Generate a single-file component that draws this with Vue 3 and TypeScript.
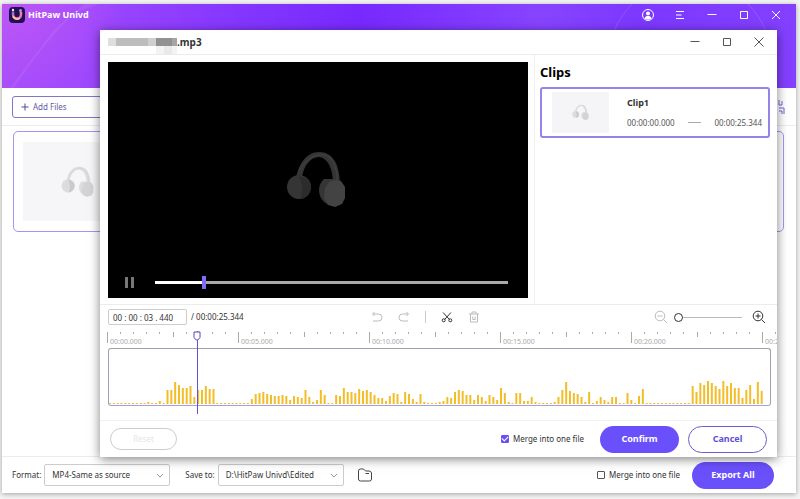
<script setup lang="ts">
import { ref, computed } from 'vue'

const position = ref(3.44)
const duration = 25.344
const zoomLevel = ref(0)
const mergeClips = ref(true)
const mergeExport = ref(false)
const timecode = ref('00 : 00 : 03 . 440')
const format = ref('MP4-Same as source')
const folder = ref('D:\\HitPaw Univd\\Edited')

const secondsWidth = 131 / 5
const barPitch = 23 / 6

const ticks = Array.from({ length: 52 }, (_, i) => ({
  x: Math.round((i * 131) / 10),
  height: i % 10 === 0 ? 11 : i % 5 === 0 ? 5 : 2,
}))
const labels = ['00:00.000', '00:05.000', '00:10.000', '00:15.000', '00:20.000', '00:25.000']

const levels: number[] = [
  ...Array(10).fill(1), 2, 1, 1, 3, 1, 14, 14, 22, 19, 16, 16, 18, 7, 14, 14, 18, 15, 15,
  ...Array(9).fill(1), 5, 10, 11, 12, 10, 9, 8, 8, 9, 8, 4, 8, 7, 6, 14, 7, 2, 4, 14, 9, 1, 1,
  9, 8, 16, 12, 12, 11, 15, 13, 14, 12, 9, 6, 6, 3, 8, 11, 10, 2, 12, 10, 5, 2, 10, 2, 1, 1, 1, 2,
  3, 7, 6, 12, 14, 13, 9, 9, 4, 9, 7, 3, 9, 7, 4, 16, 11, 2, 1, 11, 11, 3, 3, 7, 2, 1, 1, 1, 1, 2,
  7, 14, 22, 13, 11, 10, 7, 2, 12, 1, 3, 7, 4, 2, 7, 7, 1, 1, 11, 4, 1, 8, 15,
  ...Array(12).fill(1), 18, 12, 21, 19, 23, 21, 18, 15, 23, 18, 21, 16, 16, 6, 14, 19, 5, 22, 13,
]

const playheadLeft = computed(() => `${Math.round(position.value * secondsWidth)}px`)
const playedShare = computed(() => `${(position.value / duration) * 100}%`)
</script>

<template>
  <div class="page">
    <svg class="defs" aria-hidden="true">
      <symbol id="headphones" viewBox="0 0 64 58">
        <path class="band" d="M10 27C13 12 21 1 33 1c14 0 20 12 21 30l-7 1C47 18 42 7 33 6 24 6 18 15 16 26z" />
        <path class="band-edge" d="M14 19C20 7 35-1 44 7c5 5 7 13 7 23" />
        <ellipse class="cup" cx="13" cy="36" rx="12" ry="12" />
        <path class="cup-side" d="M13 26c7-1 12 4 12 10s-5 12-11 12c3-7 3-15-1-22z" />
        <path class="cup" d="M38 28h9v27l-6-2c-5-3-8-8-8-14 0-5 2-8 5-11z" />
        <path class="cup-face" d="m48 29 7 1 4 6v11l-3 6-7 3-7-2-4-7 1-10 4-6z" />
      </symbol>
    </svg>

    <main class="app">
      <header class="app-header">
        <svg class="streaks" viewBox="0 0 794 84" preserveAspectRatio="none" aria-hidden="true">
          <path d="M12 84C30 56 48 32 74 8l24-8H82L52 26 8 84z" />
          <circle cx="688" cy="58" r="82" />
        </svg>
        <svg class="logo" viewBox="0 0 16 16" aria-hidden="true">
          <defs>
            <linearGradient id="mark" x1="0" y1="0" x2="1" y2="1">
              <stop offset="0" stop-color="#7a5cff" />
              <stop offset=".5" stop-color="#ff9a6b" />
              <stop offset="1" stop-color="#e05bff" />
            </linearGradient>
          </defs>
          <rect width="16" height="16" rx="4" fill="#231050" />
          <path d="M4 4.500v3a4 4 0 0 0 8 0V5" fill="none" stroke="url(#mark)" stroke-width="2.500" />
          <circle cx="4" cy="3" r="1.200" fill="#f4e8ff" />
          <circle cx="11.500" cy="3.500" r="1.500" fill="#b98cff" />
          <path d="M4 9.500c1.500 3 5 3.500 7 1.500" fill="none" stroke="#ffd3a0" stroke-width="1.500" />
        </svg>
        <strong class="brand">HitPaw Univd</strong>
        <nav class="window-buttons">
          <button aria-label="Account">
            <svg viewBox="0 0 12 12"><circle cx="6" cy="6" r="5.500" /><circle class="solid" cx="6" cy="4.500" r="2" /><path class="solid" d="M2.500 9.500C3 7.500 4.500 7 6 7s3 .5 3.500 2.500C8 11 4 11 2.500 9.500z" /></svg>
          </button>
          <button aria-label="Menu"><svg viewBox="0 0 12 12"><path d="M2 2.500h8M2 6h5.500M2 9.500h8" /></svg></button>
          <button aria-label="Minimize"><svg viewBox="0 0 12 12"><path d="M1.500 5.500h9" /></svg></button>
          <button aria-label="Maximize"><svg viewBox="0 0 12 12"><path d="M2.500 2.500h7v7h-7z" /></svg></button>
          <button aria-label="Close"><svg viewBox="0 0 12 12"><path d="m2 2 8 8M10 2l-8 8" /></svg></button>
        </nav>
      </header>

      <section class="app-toolbar">
        <button class="add-files">
          <svg viewBox="0 0 8 8" aria-hidden="true"><path d="M4 .5v7M.5 4h7" /></svg>Add Files
        </button>
        <svg class="accel" viewBox="0 0 16 16" aria-hidden="true"><path d="M9 1v5h3V2M9 9h5v6M9 12h3v3M2 3h4v10H2z" /></svg>
      </section>

      <section class="file-list">
        <article class="file-card">
          <div class="file-thumb"><svg class="phones light"><use href="#headphones" /></svg></div>
        </article>
      </section>

      <footer class="app-footer">
        <label for="format">Format:</label>
        <div class="picker">
          <select id="format" v-model="format"><option>MP4-Same as source</option></select>
          <svg viewBox="0 0 8 5" aria-hidden="true"><path d="m1 1 3 3 3-3" /></svg>
        </div>
        <label class="save-label" for="folder">Save to:</label>
        <div class="picker">
          <select id="folder" v-model="folder"><option>D:\HitPaw Univd\Edited</option></select>
          <svg viewBox="0 0 8 5" aria-hidden="true"><path d="m1 1 3 3 3-3" /></svg>
        </div>
        <button class="open-folder" aria-label="Open folder">
          <svg viewBox="0 0 16 14"><path d="M1.500 3Q1.500 1 3.500 1h3l2 2H12q2 0 2.500 2v6q0 2-2 2h-9q-2 0-2-2zM8.500 5.500H12" /></svg>
        </button>
        <label class="check push"><input v-model="mergeExport" type="checkbox" />Merge into one file</label>
        <button class="pill export">Export All</button>
      </footer>
    </main>

    <section class="dialog" role="dialog" aria-labelledby="dialog-title">
      <header class="dialog-header">
        <svg class="masked" viewBox="0 0 69 16" preserveAspectRatio="none" aria-hidden="true">
          <path fill="#dedede" d="M0 0h69v8H0z" />
          <path fill="#bdbdbd" d="M8 0h32v8H8z" />
          <path fill="#cfcfcf" d="M40 0h8v8h-8z" />
          <path fill="#919191" d="M48 0h16v8H48z" />
          <path fill="#a5a5a5" d="M64 0h5v8h-5z" />
          <path fill="#f3f3f3" d="M48 8h21v8H48z" />
          <path fill="#e9e9e9" d="M56 8h8v8h-8z" />
        </svg>
        <h1 id="dialog-title">.mp3</h1>
        <nav class="window-buttons dark">
          <button aria-label="Minimize editor"><svg viewBox="0 0 12 12"><path d="M1.500 5.500h9" /></svg></button>
          <button aria-label="Maximize editor"><svg viewBox="0 0 12 12"><path d="M2.500 2.500h7v7h-7z" /></svg></button>
          <button aria-label="Close editor"><svg viewBox="0 0 12 12"><path d="m1.500 1.500 9 9M10.500 1.500l-9 9" /></svg></button>
        </nav>
      </header>

      <div class="workspace">
        <div class="player">
          <svg class="phones night"><use href="#headphones" /></svg>
          <div class="transport">
            <button aria-label="Pause"><svg viewBox="0 0 10 11"><path d="M0 0h3v11H0zM6 0h3v11H6z" /></svg></button>
            <input
              v-model.number="position" class="seek" type="range" min="0" :max="duration" step="0.001"
              aria-label="Position" :style="{ '--played': playedShare }"
            />
          </div>
        </div>
        <aside class="clips">
          <h2>Clips</h2>
          <article class="clip">
            <div class="clip-thumb"><svg class="phones light"><use href="#headphones" /></svg></div>
            <div class="clip-info">
              <h3>Clip1</h3>
              <p><span>00:00:00.000</span><i></i><span>00:00:25.344</span></p>
            </div>
          </article>
        </aside>
      </div>

      <div class="edit-bar">
        <div class="time">
          <input v-model="timecode" type="text" aria-label="Current time" />
          <span>/ 00:00:25.344</span>
        </div>
        <div class="tools">
          <button aria-label="Undo"><svg viewBox="0 0 12 12"><path d="M3.500 1 1.500 3l2 2M2 3h5.500a3 3 0 0 1 0 7H2" /></svg></button>
          <button aria-label="Redo"><svg viewBox="0 0 12 12"><path d="m8.500 1 2 2-2 2M10 3H4.500a3 3 0 0 0 0 7H10" /></svg></button>
          <i class="divider"></i>
          <button class="ready" aria-label="Cut"><svg viewBox="0 0 12 12"><path d="m2 1.500 6.500 7M10 1.500l-6.500 7" /><circle cx="2.700" cy="9.300" r="1.500" /><circle cx="9.300" cy="9.300" r="1.500" /></svg></button>
          <button aria-label="Delete"><svg viewBox="0 0 12 12"><path d="M1 3h10M4 3V1h4v2M2.500 3v8h7V3M4.800 5.500v3M7.200 5.500v3M4.800 8.500h2.400" /></svg></button>
        </div>
        <div class="zoom">
          <button aria-label="Zoom out"><svg viewBox="0 0 14 14"><circle cx="6" cy="6" r="4.800" /><path d="M3.500 6h5M9.500 9.500 13 13" /></svg></button>
          <input v-model.number="zoomLevel" type="range" min="0" max="10" aria-label="Timeline zoom" />
          <button class="ready" aria-label="Zoom in"><svg viewBox="0 0 14 14"><circle cx="6" cy="6" r="4.800" /><path d="M3.500 6h5M6 3.500v5M9.500 9.500 13 13" /></svg></button>
        </div>
      </div>

      <div class="timeline">
        <svg class="ruler" aria-hidden="true">
          <rect v-for="tick in ticks" :key="tick.x" :x="tick.x" y="1" width="1" :height="tick.height" />
          <text v-for="(label, i) in labels" :key="label" :x="i * 131 + 3" y="13">{{ label }}</text>
        </svg>
        <div class="track">
          <svg class="wave" aria-hidden="true">
            <rect v-for="(level, i) in levels" :key="i" :x="i * barPitch" :y="23 - level" width="2" :height="level" />
          </svg>
        </div>
        <div class="playhead" :style="{ left: playheadLeft }">
          <svg viewBox="0 0 8 10"><path d="M1 1h6v5.500L4.800 9H3.200L1 6.500z" /></svg>
        </div>
      </div>

      <footer class="dialog-footer">
        <button class="pill reset" disabled>Reset</button>
        <label class="check push"><input v-model="mergeClips" type="checkbox" />Merge into one file</label>
        <button class="pill confirm">Confirm</button>
        <button class="pill cancel">Cancel</button>
      </footer>
    </section>
  </div>
</template>

<style>
body {
  background: #f4f4f5;
}
</style>

<style scoped>
.page {
  position: relative;
  display: flex;
  box-sizing: border-box;
  min-height: 100vh;
  padding: 4px 4px 6px 2px;
  overflow: hidden;
  color: #333;
  font: 8px/12px "Noto Sans", sans-serif;
}
.page * {
  box-sizing: border-box;
}
.defs {
  position: absolute;
  width: 0;
  height: 0;
}
button,
input,
select {
  margin: 0;
  padding: 0;
  border: 0;
  background: none;
  color: inherit;
  font: inherit;
}
h1,
h2,
h3,
p {
  margin: 0;
}
svg {
  display: block;
  flex: none;
}

/* Main window */
.app {
  display: flex;
  flex: 1;
  flex-direction: column;
  background: #fff;
  box-shadow: 0 1px 5px rgba(0, 0, 0, 0.35);
}
.app-header {
  position: relative;
  display: flex;
  align-items: flex-start;
  height: 84px;
  padding: 3px 14px 0 7px;
  background:
    radial-gradient(ellipse 120px 100px at 0 0, rgba(214, 98, 240, 0.5), transparent),
    linear-gradient(90deg, #a44cfb 0, #9f49fd 10%, #8436ff 30%, #7829ff 45%, #8744ff 68%, #7c38ff 80%, #8440ff);
  color: #fff;
}
.streaks {
  position: absolute;
  inset: 0;
  width: 100%;
  height: 100%;
}
.streaks path {
  fill: rgba(255, 255, 255, 0.07);
}
.streaks circle {
  fill: none;
  stroke: rgba(255, 255, 255, 0.13);
}
.logo {
  position: relative;
  width: 16px;
  height: 16px;
}
.brand {
  position: relative;
  margin-left: 3px;
  font-size: 9px;
  line-height: 16px;
}
.window-buttons {
  position: relative;
  display: flex;
  gap: 20px;
  margin-left: auto;
}
.window-buttons button {
  width: 12px;
  height: 16px;
}
.window-buttons svg {
  width: 12px;
  height: 12px;
  fill: none;
  stroke: #fff;
}
.window-buttons .solid {
  fill: #fff;
  stroke: none;
}
.app-toolbar {
  display: flex;
  align-items: center;
  justify-content: space-between;
  height: 38px;
  padding: 0 10px;
  border-bottom: 1px solid #ececf0;
}
.add-files {
  display: flex;
  align-items: center;
  gap: 4px;
  width: 110px;
  height: 22px;
  padding-left: 8px;
  border: 1px solid #8077c8;
  border-radius: 3px;
  color: #6459a6;
}
.add-files svg {
  width: 8px;
  height: 8px;
  stroke: #5548a0;
}
.accel {
  width: 16px;
  height: 16px;
  fill: none;
  stroke: #7562dc;
}
.file-list {
  flex: 1;
  padding: 5px 12px 0 11px;
}
.file-card {
  height: 101px;
  padding: 10px 9px;
  border: 1px solid #a296f5;
  border-radius: 5px;
}
.file-thumb {
  display: grid;
  place-items: center;
  width: 110px;
  height: 79px;
  background: #f6f6f8;
}
.file-thumb .phones {
  width: 35px;
  height: 32px;
}
.phones.light {
  color: #dcdcde;
  --edge: #cfcfd1;
  --side: #cacacc;
  --face: #d3d3d5;
}
.phones.night {
  color: #353535;
  --edge: #444;
  --side: #2c2c2c;
  --face: #434343;
}
.band,
.cup {
  fill: currentColor;
}
.band-edge {
  fill: none;
  stroke: var(--edge);
}
.cup-side {
  fill: var(--side);
}
.cup-face {
  fill: var(--face);
}
.app-footer {
  display: flex;
  align-items: center;
  height: 37px;
  padding: 0 22px 0 10px;
  border-top: 1px solid #ececf0;
}
.picker {
  display: grid;
  align-items: center;
  width: 126px;
  margin-left: 3px;
}
.picker select,
.picker svg {
  grid-area: 1 / 1;
}
.picker select {
  width: 100%;
  height: 22px;
  padding-left: 7px;
  border: 1px solid #ccc;
  border-radius: 2px;
  appearance: none;
}
.picker svg {
  justify-self: end;
  width: 8px;
  height: 5px;
  margin-right: 6px;
  fill: none;
  stroke: #999;
  pointer-events: none;
}
.save-label {
  margin-left: 15px;
}
.open-folder {
  margin-left: 13px;
}
.open-folder svg {
  width: 16px;
  height: 14px;
  fill: none;
  stroke: #444;
}
.check {
  display: flex;
  align-items: center;
  gap: 4px;
}
.push {
  margin-left: auto;
}
.check input {
  display: grid;
  place-items: center;
  width: 8px;
  height: 8px;
  border: 1px solid #555;
  border-radius: 1px;
  appearance: none;
}
.check input:checked {
  border-color: #6a4ff5;
  background: #6a4ff5;
}
.check input:checked::after {
  width: 5px;
  height: 3px;
  border: solid #fff;
  border-width: 0 0 1px 1px;
  content: "";
  transform: translateY(-1px) rotate(-45deg);
}
.pill {
  height: 27px;
  border-radius: 14px;
  font-size: 9px;
  font-weight: 700;
}
.export,
.confirm {
  background: #6a50fb;
  color: #fff;
}
.export {
  width: 82px;
  margin-left: 12px;
}

/* Clip editor window */
.dialog {
  position: absolute;
  inset: 30px 23px 42px 100px;
  display: flex;
  flex-direction: column;
  background: #fff;
  box-shadow: 0 2px 10px rgba(0, 0, 0, 0.5);
}
.dialog-header {
  display: flex;
  align-items: center;
  height: 25px;
  padding: 0 12px 0 8px;
  border-bottom: 1px solid #ececec;
}
.masked {
  align-self: flex-end;
  width: 69px;
  height: 16px;
}
.dialog-header h1 {
  font-size: 10px;
  line-height: 16px;
}
.window-buttons.dark button {
  height: 12px;
}
.window-buttons.dark svg {
  stroke: #555;
}
.workspace {
  display: flex;
  flex: 1;
  gap: 6px;
  padding-left: 8px;
  border-bottom: 1px solid #ececec;
}
.player {
  display: grid;
  grid-template-rows: 1fr auto;
  flex: 1;
  margin: 7px 0 6px;
  background: #000;
}
.player .phones {
  width: 64px;
  height: 58px;
  place-self: end center;
  margin-bottom: 57px;
}
.transport {
  display: flex;
  align-items: center;
  gap: 20px;
  height: 32px;
  padding: 0 20px 0 17px;
}
.transport svg {
  width: 10px;
  height: 11px;
  fill: #777;
}
.seek {
  flex: 1;
  min-width: 0;
  height: 14px;
  background: linear-gradient(90deg, #fff var(--played), #aaa var(--played)) center / 100% 3px no-repeat;
  appearance: none;
}
.seek::-webkit-slider-thumb {
  width: 4px;
  height: 13px;
  background: #806cf5;
  appearance: none;
}
.clips {
  flex: none;
  width: 243px;
  padding: 8px 7px 0 5px;
  border-left: 1px solid #f0f0f0;
}
.clips h2 {
  color: #000;
  font-size: 13px;
  line-height: 18px;
}
.clip {
  display: flex;
  align-items: center;
  gap: 18px;
  height: 51px;
  margin-top: 6px;
  padding: 0 6px 0 10px;
  border: 2px solid #9484e8;
  border-radius: 3px;
}
.clip-thumb {
  display: grid;
  place-items: center;
  width: 57px;
  height: 41px;
  background: #f5f5f7;
}
.clip-thumb .phones {
  width: 18px;
  height: 17px;
}
.clip-info {
  display: grid;
  flex: 1;
  gap: 8px;
}
.clip-info h3 {
  font-size: 9px;
  line-height: 12px;
}
.clip-info p {
  display: flex;
  align-items: center;
  justify-content: space-between;
  color: #555;
}
.clip-info i {
  width: 13px;
  height: 1px;
  background: #aaa;
}
.edit-bar {
  display: grid;
  grid-template-columns: 40% auto 1fr;
  align-items: center;
  height: 26px;
  padding: 0 11px 2px 8px;
}
.time,
.tools,
.zoom {
  display: flex;
  align-items: center;
}
.time {
  gap: 4px;
}
.time input {
  width: 79px;
  height: 16px;
  padding-left: 4px;
  border: 1px solid #ccc;
  border-radius: 2px;
}
.tools {
  gap: 15px;
}
.tools svg {
  width: 12px;
  height: 12px;
}
.tools svg,
.zoom svg {
  fill: none;
  stroke: #bbb;
}
.edit-bar .ready svg {
  stroke: #333;
}
.divider {
  width: 1px;
  height: 12px;
  background: #ccc;
}
.zoom {
  justify-content: flex-end;
  gap: 6px;
}
.zoom svg {
  width: 14px;
  height: 14px;
}
.zoom input {
  width: 68px;
  height: 10px;
  margin-right: 4px;
  background: linear-gradient(#bbb, #bbb) center / 100% 1px no-repeat;
  appearance: none;
}
.zoom input::-webkit-slider-thumb {
  width: 9px;
  height: 9px;
  border: 1px solid #333;
  border-radius: 50%;
  background: #fff;
  appearance: none;
}
.timeline {
  position: relative;
  padding-left: 7px;
}
.ruler {
  width: 100%;
  height: 17px;
  fill: #aaa;
  font-size: 7px;
}
.track {
  display: flex;
  align-items: flex-end;
  height: 58px;
  margin: 0 6px 0 1px;
  border: 1px solid #a0a0ac;
  border-bottom-color: #a99fd8;
  border-radius: 3px;
}
.wave {
  width: 100%;
  height: 24px;
  fill: #f3bd27;
}
.playhead {
  position: absolute;
  top: 0;
  width: 1px;
  height: 83px;
  margin-left: 7px;
  background: #6452d0;
}
.playhead svg {
  width: 8px;
  height: 10px;
  margin-left: -4px;
  fill: #fff;
  stroke: #5646b8;
}
.dialog-footer {
  display: flex;
  align-items: center;
  height: 37px;
  margin-top: 14px;
  padding: 0 10px;
  border-top: 1px solid #f0f0f0;
}
.reset {
  width: 67px;
  height: 22px;
  border: 1px solid #ccc;
  color: #e6e6e6;
  font-size: 8px;
  font-weight: 400;
}
.confirm {
  width: 79px;
  margin-left: 16px;
}
.cancel {
  width: 79px;
  margin-left: 9px;
  border: 1px solid #6d5bd0;
  color: #6451d4;
}
</style>
